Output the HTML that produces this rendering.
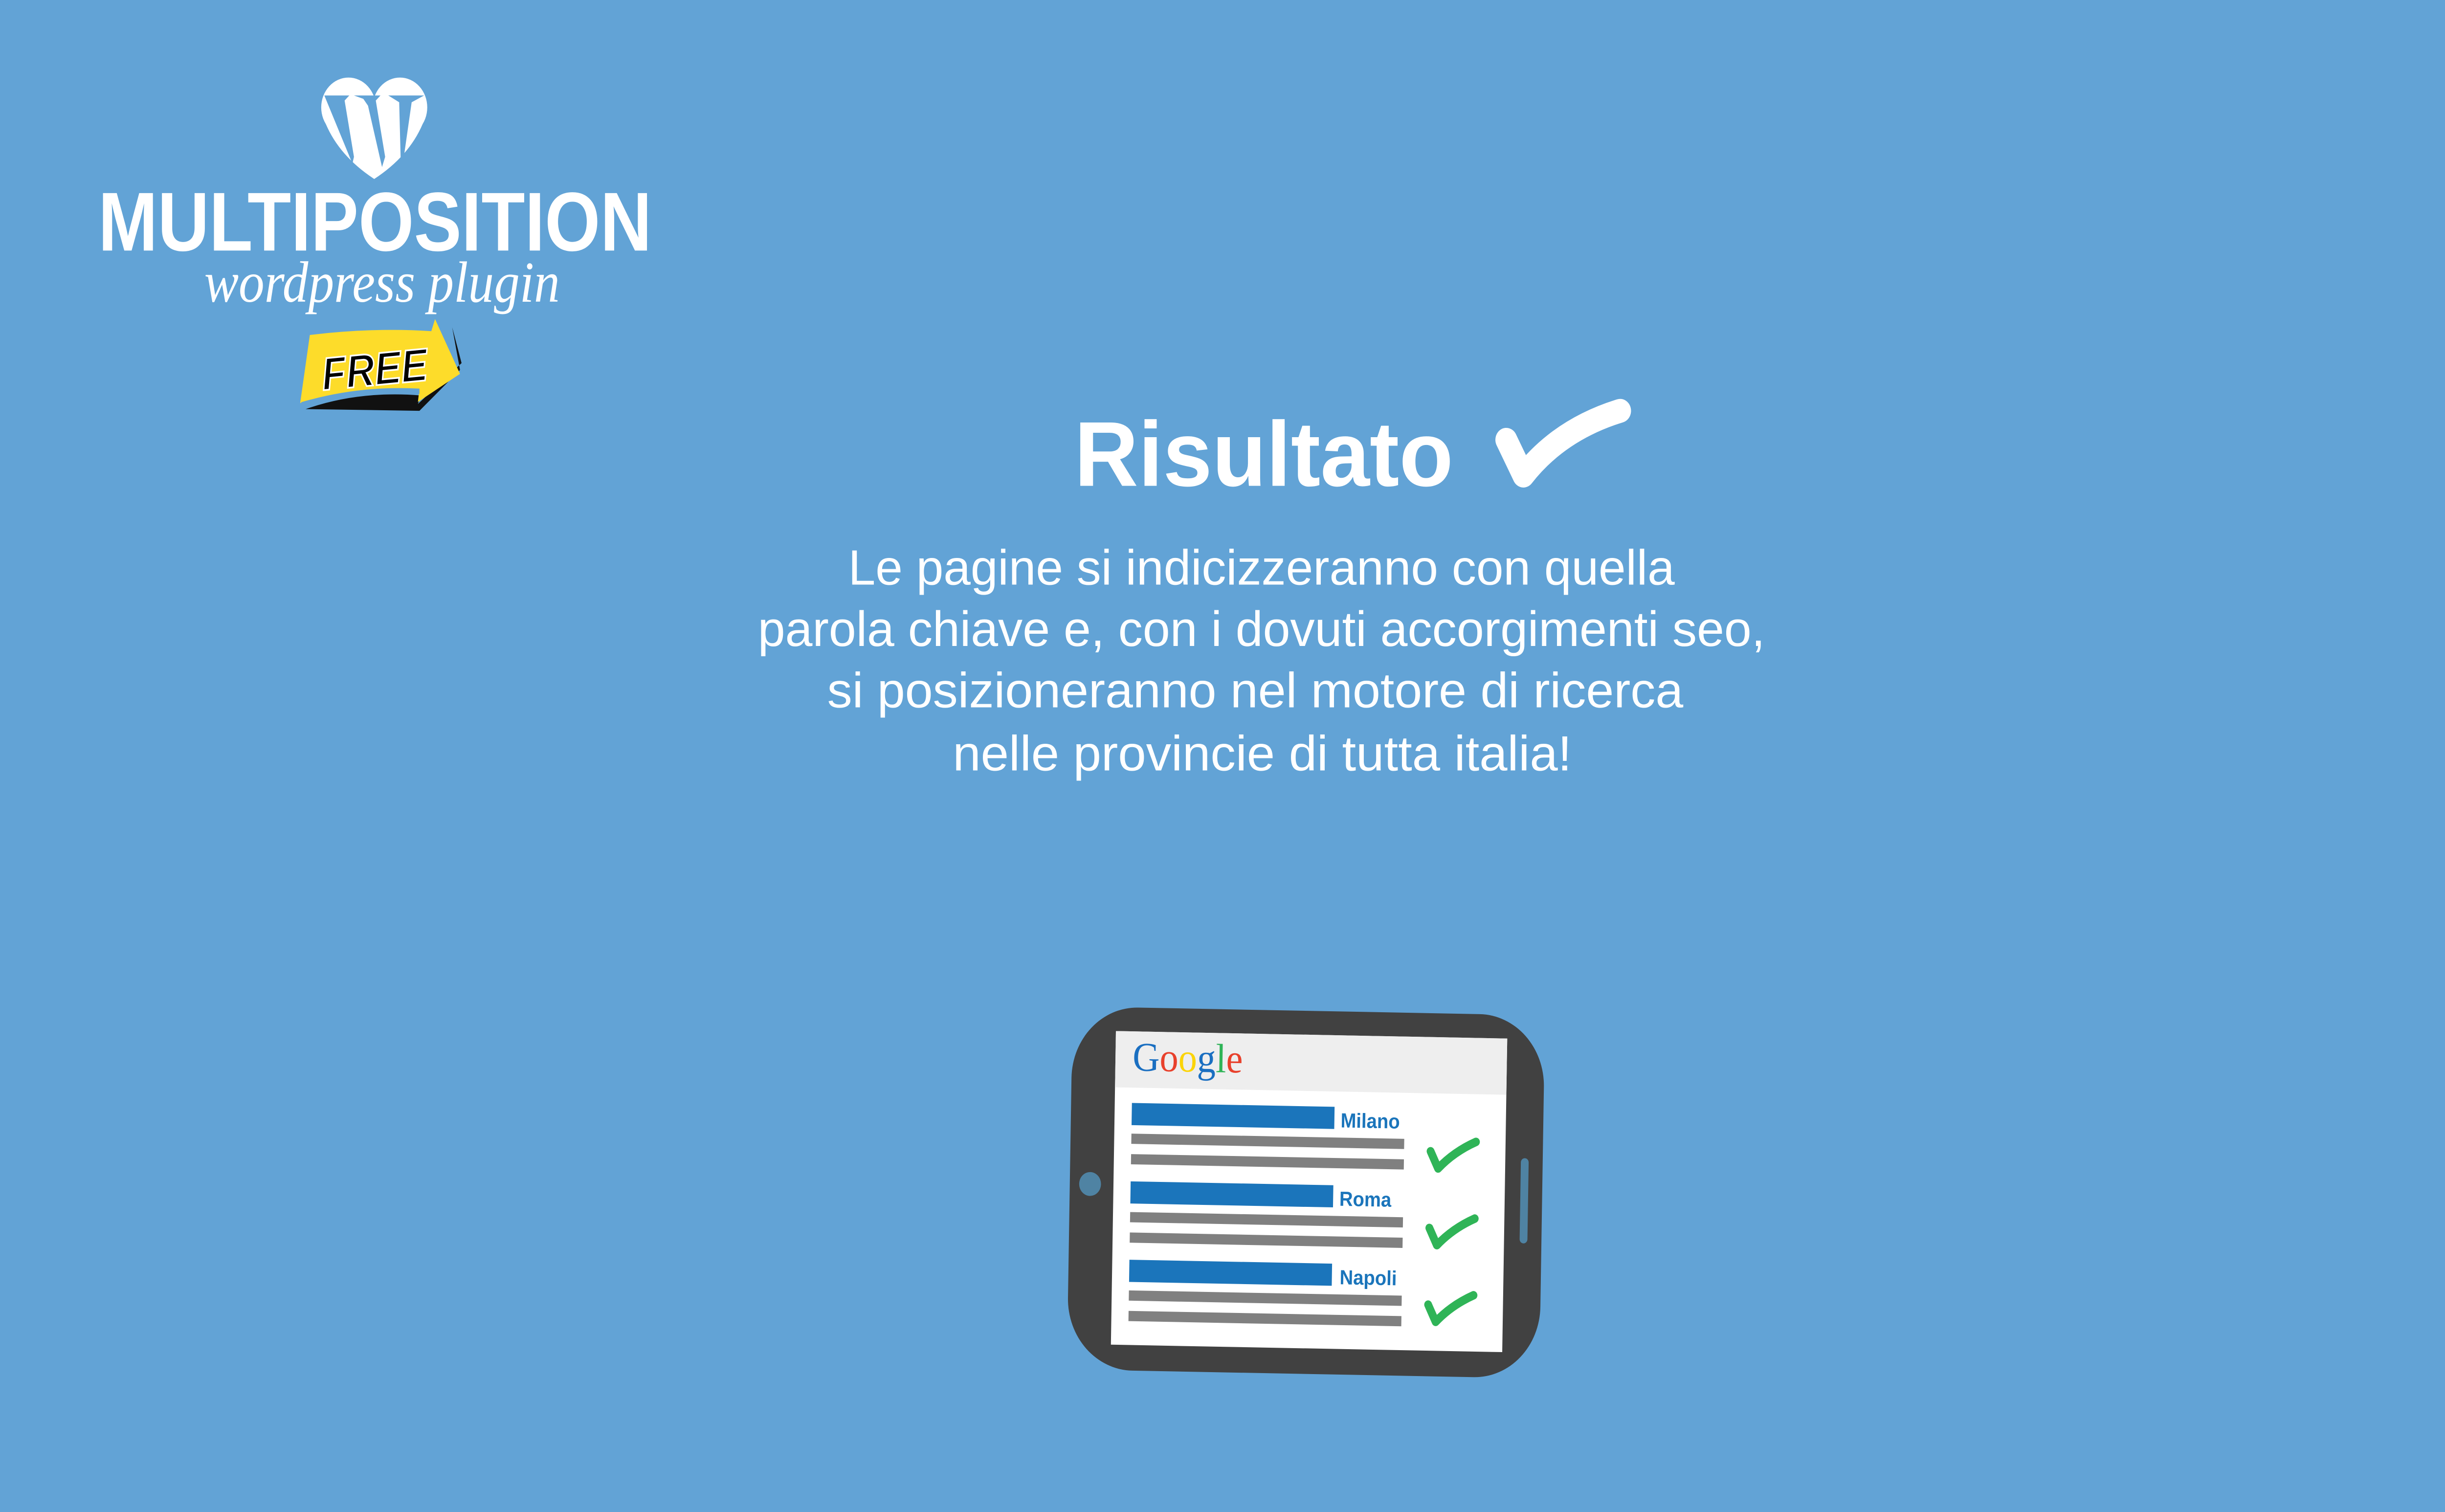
<!DOCTYPE html>
<html><head><meta charset="utf-8"><style>
html,body{margin:0;padding:0;background:#62a3d6;overflow:hidden;width:100%;height:100%}
svg{display:block;position:fixed;left:0;top:0;width:100vw;height:100vh}
</style></head><body>
<svg viewBox="0 0 1568 887" preserveAspectRatio="none" xmlns="http://www.w3.org/2000/svg">
<rect width="1568" height="887" fill="#62a3d6"/>
<g>
<circle cx="223.5" cy="63" r="17.5" fill="#fff"/>
<circle cx="256.5" cy="63" r="17.5" fill="#fff"/>
<path d="M207 68 Q215 90 240 105 Q265 90 273 68 Z" fill="#fff"/>
<path d="M208 56 L224 56 L221 59 L227 92 L226 96 Z" fill="#62a3d6"/>
<path d="M227 56 L244 56 L241 59 L247 92 L245 98 L236 62 L233 58 Z" fill="#62a3d6"/>
<path d="M249 56 L272 56 L264 60 L259 92 L257 95 L256 60 Z" fill="#62a3d6"/>
</g>
<text x="240.5" y="147" text-anchor="middle" font-family="Liberation Sans, sans-serif" font-weight="bold" font-size="49" fill="#fff" textLength="355" lengthAdjust="spacingAndGlyphs">MULTIPOSITION</text>
<text x="245" y="177" text-anchor="middle" font-family="Liberation Serif, serif" font-style="italic" font-size="34" fill="#fff" textLength="228" lengthAdjust="spacingAndGlyphs">wordpress plugin</text>
<path d="M196 240 Q230 229 270 232 L268 237 L296 213 L290 192 L295 217 L269 241 Z" fill="#111"/>
<path d="M198.7 196.5 Q240 192 276.6 194.3 L279 187.2 L295 219.3 L268 235.8 L269 228 Q225 228 192.5 236.5 Z" fill="#fddc2a"/>
<path d="M193 236 Q230 226 269 228 L269 231 Q230 229 196 239 Z" fill="#62a3d6"/>
<text x="240" y="226" text-anchor="middle" font-family="Liberation Sans, sans-serif" font-weight="bold" font-style="italic" font-size="27" fill="#000" stroke="#fff" stroke-width="1" textLength="68" lengthAdjust="spacingAndGlyphs" transform="rotate(-5 240 215)">FREE</text>
<text x="689" y="285" font-family="Liberation Sans, sans-serif" font-weight="bold" font-size="54" fill="#fff" textLength="243" lengthAdjust="spacingAndGlyphs">Risultato</text>
<path d="M966 258 L977 279 Q1000 252 1039 241" fill="none" stroke="#fff" stroke-width="14" stroke-linecap="round" stroke-linejoin="round"/>
<g font-family="Liberation Sans, sans-serif" font-size="29" fill="#fff" text-anchor="middle">
<text x="809" y="343" textLength="530" lengthAdjust="spacingAndGlyphs">Le pagine si indicizzeranno con quella</text>
<text x="809" y="379" textLength="646" lengthAdjust="spacingAndGlyphs">parola chiave e, con i dovuti accorgimenti seo,</text>
<text x="805" y="415" textLength="549" lengthAdjust="spacingAndGlyphs">si posizioneranno nel motore di ricerca</text>
<text x="809.5" y="452" textLength="397" lengthAdjust="spacingAndGlyphs">nelle provincie di tutta italia!</text>
</g>
<g transform="rotate(1 838 700)">
<rect x="686" y="593" width="303" height="213" rx="42" fill="#414141"/>
<rect x="714" y="607" width="251" height="184" fill="#fff"/>
<rect x="714" y="607" width="251" height="33" fill="#eeeeee"/>
<text x="725" y="630" font-family="Liberation Serif, serif" font-size="24"><tspan fill="#1a6fc1">G</tspan><tspan fill="#e8412c">o</tspan><tspan fill="#fbd409">o</tspan><tspan fill="#1a6fc1">g</tspan><tspan fill="#2fb457">l</tspan><tspan fill="#e8412c">e</tspan></text>
<circle cx="699" cy="697" r="7" fill="#4f83a3"/>
<rect x="975" y="677" width="5" height="50" rx="2.5" fill="#4f83a3"/>
<g fill="#1b75bb">
<rect x="725" y="649" width="130" height="13"/>
<rect x="725" y="695" width="130" height="13"/>
<rect x="725" y="741" width="130" height="13"/>
</g>
<g font-family="Liberation Sans, sans-serif" font-weight="bold" font-size="12" fill="#1b75bb">
<text x="859" y="661">Milano</text>
<text x="859" y="707">Roma</text>
<text x="860" y="753">Napoli</text>
</g>
<g fill="#808080">
<rect x="725" y="667" width="175" height="6"/>
<rect x="725" y="679" width="175" height="6"/>
<rect x="725" y="713" width="175" height="6"/>
<rect x="725" y="725" width="175" height="6"/>
<rect x="725" y="759" width="175" height="6"/>
<rect x="725" y="771" width="175" height="6"/>
</g>
<g fill="none" stroke="#2fb457" stroke-width="5" stroke-linecap="round" stroke-linejoin="round">
<path d="M917 674 L922 684 Q932 674 946 668"/>
<path d="M917 719 L922 729 Q932 719 946 713"/>
<path d="M917 764 L922 774 Q932 764 946 758"/>
</g>
</g>
</svg>
</body></html>
